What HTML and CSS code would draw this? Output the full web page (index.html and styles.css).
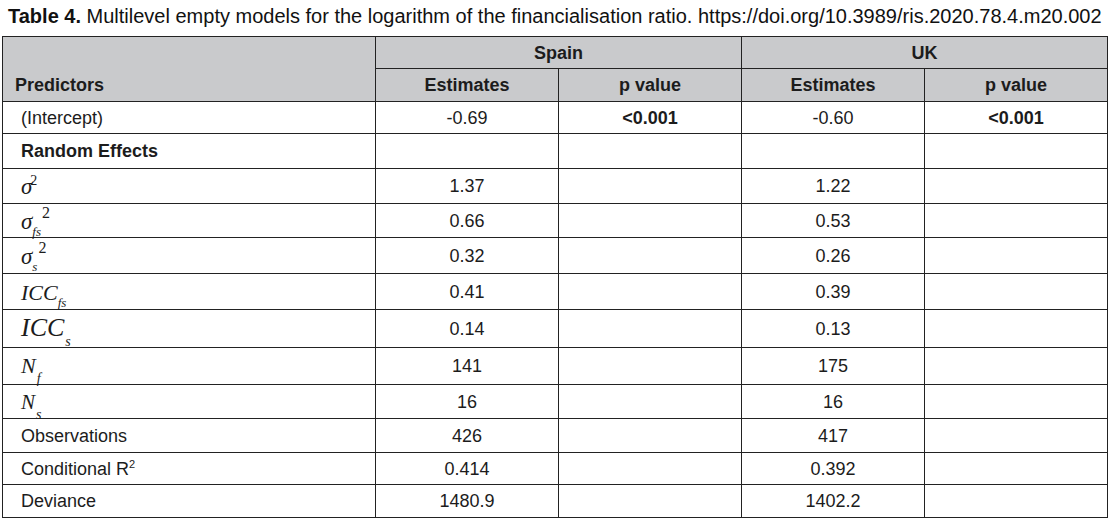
FILE: index.html
```html
<!DOCTYPE html>
<html lang="en">
<head>
<meta charset="utf-8">
<title>Table 4</title>
<link rel="stylesheet" href="styles.css">
</head>
<body>
<div class="page">
  <p class="caption"><b>Table 4.</b> Multilevel empty models for the logarithm of the financialisation ratio. https://doi.org/10.3989/ris.2020.78.4.m20.002</p>
  <table class="tbl">
    <colgroup>
      <col class="c-pred">
      <col class="c-val">
      <col class="c-val">
      <col class="c-val">
      <col class="c-val">
    </colgroup>
    <thead>
      <tr class="h32">
        <th rowspan="2" class="pred-head">Predictors</th>
        <th colspan="2">Spain</th>
        <th colspan="2">UK</th>
      </tr>
      <tr class="h33">
        <th>Estimates</th>
        <th>p value</th>
        <th>Estimates</th>
        <th>p value</th>
      </tr>
    </thead>
    <tbody>
      <tr class="h32">
        <td class="lab">(Intercept)</td>
        <td>-0.69</td>
        <td class="b">&lt;0.001</td>
        <td>-0.60</td>
        <td class="b">&lt;0.001</td>
      </tr>
      <tr class="h35">
        <td class="lab b">Random Effects</td>
        <td></td><td></td><td></td><td></td>
      </tr>
      <tr class="h35">
        <td class="lab"><span class="m m-sig">σ<sup class="m-sup">2</sup></span></td>
        <td>1.37</td><td></td><td>1.22</td><td></td>
      </tr>
      <tr class="h34">
        <td class="lab"><span class="m m-sig">σ<sub class="m-sub">fs</sub><sup class="m-sup2">2</sup></span></td>
        <td>0.66</td><td></td><td>0.53</td><td></td>
      </tr>
      <tr class="h36">
        <td class="lab"><span class="m m-sig">σ<sub class="m-sub">s</sub><sup class="m-sup2">2</sup></span></td>
        <td>0.32</td><td></td><td>0.26</td><td></td>
      </tr>
      <tr class="h36">
        <td class="lab"><span class="m m-icc">ICC<sub class="m-sub">fs</sub></span></td>
        <td>0.41</td><td></td><td>0.39</td><td></td>
      </tr>
      <tr class="h38">
        <td class="lab"><span class="m m-icc-lg">ICC<sub class="m-sub-lg">s</sub></span></td>
        <td>0.14</td><td></td><td>0.13</td><td></td>
      </tr>
      <tr class="h37">
        <td class="lab"><span class="m m-n">N<sub class="m-sub-lg">f</sub></span></td>
        <td>141</td><td></td><td>175</td><td></td>
      </tr>
      <tr class="h34">
        <td class="lab"><span class="m m-n2">N<sub class="m-sub-lg">s</sub></span></td>
        <td>16</td><td></td><td>16</td><td></td>
      </tr>
      <tr class="h34">
        <td class="lab">Observations</td>
        <td>426</td><td></td><td>417</td><td></td>
      </tr>
      <tr class="h32">
        <td class="lab">Conditional R<sup class="r-sup">2</sup></td>
        <td>0.414</td><td></td><td>0.392</td><td></td>
      </tr>
      <tr class="h33">
        <td class="lab">Deviance</td>
        <td>1480.9</td><td></td><td>1402.2</td><td></td>
      </tr>
    </tbody>
  </table>
</div>
</body>
</html>
```

FILE: styles.css
```css
html, body {
  margin: 0;
  padding: 0;
  background: #ffffff;
}

.page {
  padding: 0 0 0 2px;
  font-family: "Liberation Sans", Arial, sans-serif;
  color: #1c1c1c;
}

.caption {
  margin: 0;
  padding: 4px 0 0 6px;
  height: 36px;
  box-sizing: border-box;
  font-size: 20px;
  line-height: 24px;
  color: #111;
  white-space: nowrap;
}

.tbl {
  border-collapse: collapse;
  table-layout: fixed;
  width: 1105px;
  font-size: 18px;
}

.c-pred { width: 373px; }
.c-val { width: 183px; }

.tbl th,
.tbl td {
  border: 1px solid #222;
  padding: 0 6px;
  text-align: center;
  vertical-align: middle;
  line-height: 20px;
}

.tbl th {
  background: #c9cacc;
  font-weight: bold;
}

.tbl th.pred-head {
  text-align: left;
  vertical-align: bottom;
  padding: 0 11px 6px 12px;
}

.tbl td.lab {
  text-align: left;
  padding-left: 18px;
}

.b { font-weight: bold; }

.h32 { height: 32px; }
.h33 { height: 33px; }
.h34 { height: 34px; }
.h35 { height: 35px; }
.h36 { height: 36px; }
.h37 { height: 37px; }
.h38 { height: 38px; }

.m {
  font-family: "Liberation Serif", "Times New Roman", serif;
  font-style: italic;
  display: inline-block;
  line-height: 20px;
  padding-top: 3px;
}

.m-sig { font-size: 23px; }
.m-icc { font-size: 22px; }
.m-icc-lg { font-size: 26px; }
.m-n { font-size: 22px; }
.m-n2 { font-size: 21px; }

.m-sup {
  font-size: 14px;
  vertical-align: 9px;
  font-style: normal;
  line-height: 0;
  margin-left: -2px;
}

.m-sup2 {
  font-size: 16px;
  vertical-align: 11px;
  font-style: normal;
  line-height: 0;
  padding-left: 1px;
}

.m-sub {
  font-size: 13px;
  vertical-align: -7px;
  line-height: 0;
}

.m-sub-lg {
  font-size: 14px;
  vertical-align: -10px;
  line-height: 0;
  margin-left: 1px;
}

.r-sup {
  font-size: 11px;
  vertical-align: 7px;
  line-height: 0;
}
```
